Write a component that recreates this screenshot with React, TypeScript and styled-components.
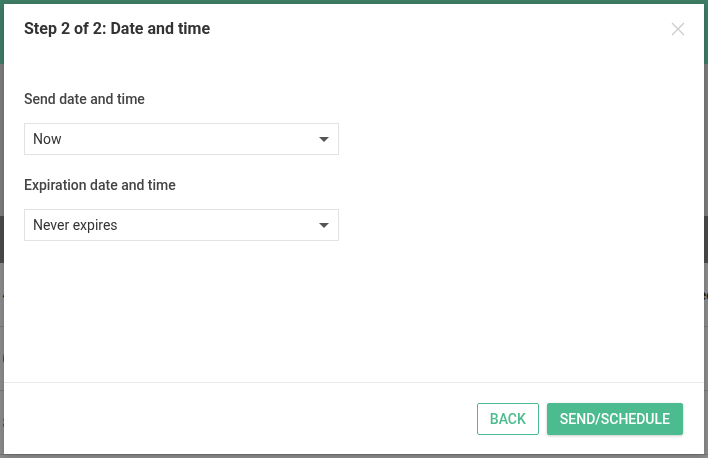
import React from "react";
import styled, { createGlobalStyle } from "styled-components";

const Global = createGlobalStyle`
  html, body { margin: 0; padding: 0; }
  body {
    width: 708px;
    height: 458px;
    overflow: hidden;
    font-family: Roboto, "Liberation Sans", Arial, sans-serif;
    background: #ffffff;
  }
  * { box-sizing: border-box; }
`;

/* ---------- underlying page (dimmed by the overlay) ---------- */
const Page = styled.div`
  width: 708px;
  height: 458px;
  display: flex;
  flex-direction: column;
  overflow: hidden;
`;

const TopBar = styled.div`
  height: 64px;
  background: #6fe2b8;
  display: flex;
  align-items: flex-start;
  padding: 0 6px;
  color: #f2f2f2;
  font-size: 18px;
  font-weight: 700;
`;

const Toolbar = styled.div`
  height: 152px;
  background: #e2e2e2;
`;

const TableHead = styled.div`
  height: 47px;
  background: #878787;
`;

const Row = styled.div`
  height: 64px;
  border-bottom: 1px solid #d8d8d8;
  display: flex;
  align-items: center;
  justify-content: space-between;
  font-size: 15px;
  color: #333;
  background: #fdfdfd;
`;

const EdgeCell = styled.span<{ $side: "left" | "right" }>`
  ${(p) => (p.$side === "left" ? "margin-left: -6px;" : "margin-right: -6px;")}
  font-weight: ${(p) => (p.$side === "right" ? 700 : 400)};
`;

/* ---------- overlay + modal ---------- */
const Overlay = styled.div`
  position: fixed;
  inset: 0;
  background: rgba(0, 0, 0, 0.45);
  padding: 4px;
  display: flex;
`;

const Modal = styled.div`
  flex: 1;
  background: #ffffff;
  display: flex;
  flex-direction: column;
  box-shadow: 0 2px 8px rgba(0, 0, 0, 0.2);
`;

const Header = styled.div`
  display: flex;
  justify-content: space-between;
  align-items: flex-start;
  padding: 14px 19px 0 20px;
`;

const Title = styled.h2`
  margin: 0;
  font-size: 16px;
  line-height: 22px;
  font-weight: 700;
  color: #333333;
`;

const CloseButton = styled.button`
  border: none;
  background: none;
  padding: 0;
  margin-top: 4px;
  width: 14px;
  height: 14px;
  display: flex;
  cursor: pointer;
`;

const Body = styled.div`
  flex: 1;
  padding: 49px 20px 0;
  display: flex;
  flex-direction: column;
`;

const Field = styled.div`
  display: flex;
  flex-direction: column;
  gap: 14px;
  margin-bottom: 20px;
`;

const Label = styled.label`
  font-size: 14px;
  line-height: 20px;
  font-weight: 500;
  color: #444444;
`;

const Select = styled.div`
  width: 315px;
  height: 32px;
  border: 1px solid #e2e2e2;
  display: flex;
  align-items: center;
  justify-content: space-between;
  padding: 0 9px 0 8px;
  font-size: 14px;
  color: #333333;
`;

const Caret = styled.span`
  width: 0;
  height: 0;
  border-left: 5px solid transparent;
  border-right: 5px solid transparent;
  border-top: 5px solid #555555;
`;

const Footer = styled.div`
  border-top: 1px solid #e9e9e9;
  height: 72px;
  display: flex;
  justify-content: flex-end;
  align-items: center;
  gap: 8px;
  padding: 0 21px 0 0;
`;

const Button = styled.button<{ $primary?: boolean }>`
  height: 32px;
  padding: 0 12px;
  font-family: inherit;
  font-size: 14px;
  font-weight: 500;
  text-transform: uppercase;
  border-radius: 2px;
  border: 1px solid #4cbb8f;
  color: ${(p) => (p.$primary ? "#ffffff" : "#4cbb8f")};
  background: ${(p) => (p.$primary ? "#4cbb8f" : "#ffffff")};
  box-shadow: ${(p) => (p.$primary ? "0 1px 3px rgba(0,0,0,0.2)" : "none")};
  cursor: pointer;
`;

const CloseIcon = () => (
  <svg width="14" height="14" viewBox="0 0 14 14">
    <path d="M1 1 L13 13 M13 1 L1 13" stroke="#cccccc" strokeWidth="1.3" fill="none" />
  </svg>
);

function SelectBox({ value }: { value: string }) {
  return (
    <Select>
      <span>{value}</span>
      <Caret />
    </Select>
  );
}

export default function App() {
  return (
    <>
      <Global />
      <Page>
        <TopBar>ggg</TopBar>
        <Toolbar />
        <TableHead />
        <Row>
          <EdgeCell $side="left">14</EdgeCell>
          <EdgeCell $side="right">ec</EdgeCell>
        </Row>
        <Row>
          <EdgeCell $side="left">10</EdgeCell>
          <EdgeCell $side="right">l</EdgeCell>
        </Row>
        <Row>
          <EdgeCell $side="left">18</EdgeCell>
          <EdgeCell $side="right"> </EdgeCell>
        </Row>
      </Page>
      <Overlay>
        <Modal>
          <Header>
            <Title>Step 2 of 2: Date and time</Title>
            <CloseButton aria-label="Close">
              <CloseIcon />
            </CloseButton>
          </Header>
          <Body>
            <Field>
              <Label>Send date and time</Label>
              <SelectBox value="Now" />
            </Field>
            <Field>
              <Label>Expiration date and time</Label>
              <SelectBox value="Never expires" />
            </Field>
          </Body>
          <Footer>
            <Button>Back</Button>
            <Button $primary>Send/Schedule</Button>
          </Footer>
        </Modal>
      </Overlay>
    </>
  );
}
